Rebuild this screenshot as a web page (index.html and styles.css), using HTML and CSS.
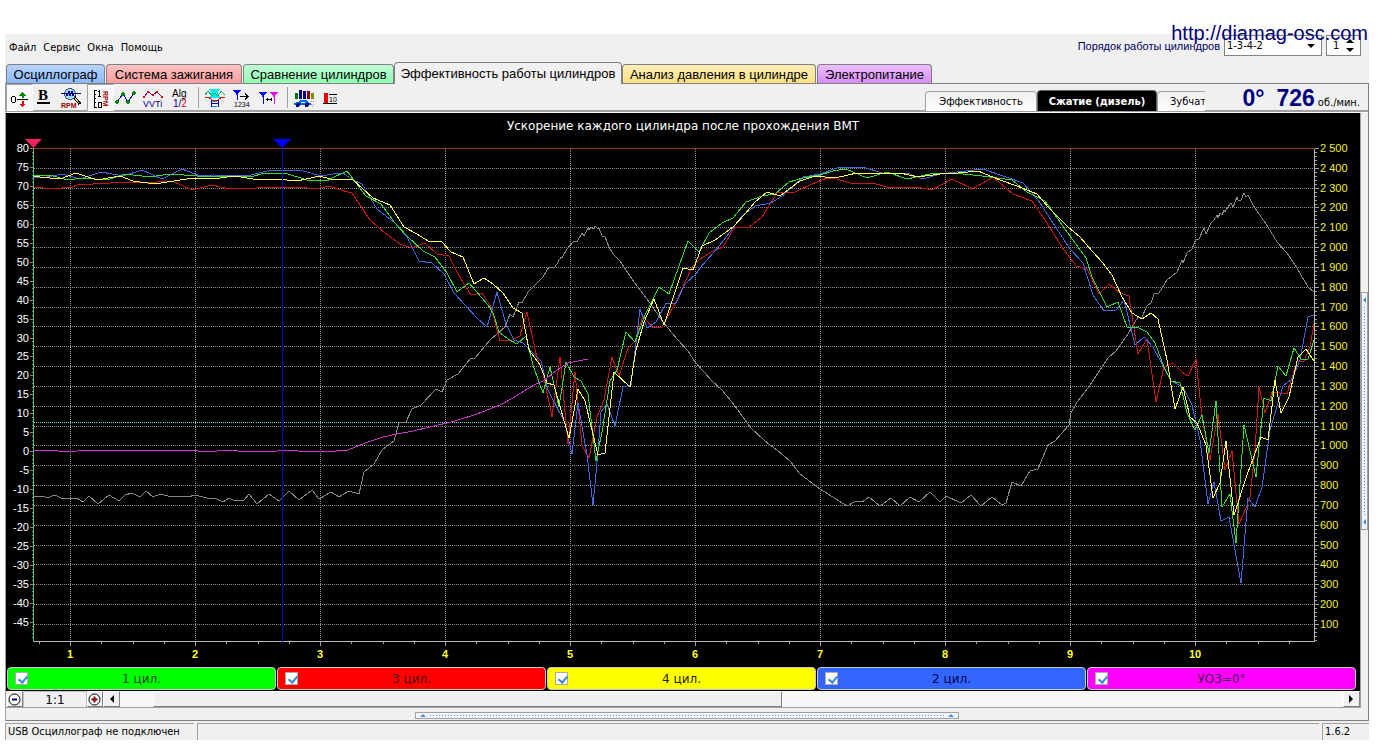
FILE: index.html
```
<!DOCTYPE html>
<html lang="ru">
<head>
    <meta charset="UTF-8">
    <meta name="viewport" content="width=device-width, initial-scale=1.0">
    <title>USB Осциллограф</title>
    <link rel="stylesheet" href="styles.css">
</head>
<body>
    <a class="site-link" href="#">http://diamag-osc.com</a>

    <div class="app">
        <header class="menu-bar">
            <nav class="menu">
                <a href="#">Файл</a>
                <a href="#">Сервис</a>
                <a href="#">Окна</a>
                <a href="#">Помощь</a>
            </nav>
            <div class="order">
                <label for="order">Порядок работы цилиндров</label>
                <div class="select-box">
                    <select id="order">
                        <option>1-3-4-2</option>
                        <option>1-2-4-3</option>
                    </select>
                </div>
                <div class="spin-box">
                    <input type="text" value="1" aria-label="Номер цилиндра">
                    <div class="spin-buttons">
                        <button class="spin-up" aria-label="Больше"></button>
                        <button class="spin-down" aria-label="Меньше"></button>
                    </div>
                </div>
            </div>
        </header>

        <nav class="tabs">
            <button class="tab tab-scope">Осциллограф</button>
            <button class="tab tab-ignition">Система зажигания</button>
            <button class="tab tab-compare">Сравнение цилиндров</button>
            <button class="tab tab-active">Эффективность работы цилиндров</button>
            <button class="tab tab-pressure">Анализ давления в цилиндре</button>
            <button class="tab tab-power">Электропитание</button>
        </nav>

        <main class="page">
            <div class="toolbar">
                <div class="tools">
                    <button class="tool pressed" aria-label="Ноль">
                        <svg viewBox="0 0 24 22">
                            <rect x="4.500" y="9.500" width="4" height="6" rx="2" fill="none" stroke="#000"/>
                            <path d="M10 12.500H21" stroke="#000"/>
                            <path d="M15.500 5L19 9H16.500V11H14.500V9H12Z" fill="#080"/>
                            <path d="M15.500 20L19 17H16.500V14H14.500V17H12Z" fill="#e00"/>
                        </svg>
                    </button>
                    <button class="tool" aria-label="Жирные линии">
                        <svg viewBox="0 0 24 22">
                            <text x="5" y="13" class="icon-bold">B</text>
                            <path d="M4 16H17" stroke="#000" stroke-width="2"/>
                        </svg>
                    </button>
                    <button class="tool" aria-label="Обороты">
                        <svg viewBox="0 0 24 22">
                            <path d="M14 10L20 17" stroke="#000" stroke-width="3"/>
                            <path d="M14 10L19 16" stroke="#e8c040" stroke-width="1"/>
                            <circle cx="10" cy="7" r="5.500" fill="#a8d8f8" stroke="#456"/>
                            <path d="M1 6.500H6L7 9L9 4L10 9L12 4L13 9L14 6.500H21" fill="none" stroke="#008"/>
                            <text x="1" y="21" class="icon-rpm">RPM</text>
                        </svg>
                    </button>
                    <button class="tool pressed" aria-label="Шкала оборотов">
                        <svg viewBox="0 0 24 22">
                            <path d="M9 3.500H6.500V20.500H9M6 7.500H8M6 11.500H8M6 15.500H8" fill="none" stroke="#000"/>
                            <path d="M10 5L11.500 4V9M10 9.500H13" fill="none" stroke="#000"/>
                            <rect x="10.500" y="15.500" width="3" height="5" rx="1" fill="none" stroke="#000"/>
                            <text class="icon-rpm" transform="translate(15 4) rotate(90)">RPM</text>
                        </svg>
                    </button>
                    <button class="tool" aria-label="Точки">
                        <svg viewBox="0 0 24 22">
                            <path d="M3 15L9 7L14 15L20 6" fill="none" stroke="#00a"/>
                            <path d="M2 13H4V14H5V16H4V17H2V16H1V14H2ZM8 5H10V6H11V8H10V9H8V8H7V6H8ZM13 13H15V14H16V16H15V17H13V16H12V14H13ZM19 4H21V5H22V7H21V8H19V7H18V5H19Z" fill="#080"/>
                        </svg>
                    </button>
                    <button class="tool" aria-label="VVTi">
                        <svg viewBox="0 0 24 22">
                            <path d="M3 10L7 5L12 8L16 5L21 10" fill="none" stroke="#808"/>
                            <path d="M2 9H4V11H2ZM6 4H8V6H6ZM11 7H13V9H11ZM15 4H17V6H15ZM20 9H22V11H20Z" fill="#e00"/>
                            <text x="2" y="20" class="icon-vvti">VVTi</text>
                        </svg>
                    </button>
                    <button class="tool" aria-label="Алгоритм">
                        <svg viewBox="0 0 24 22">
                            <text x="4" y="10" class="icon-text">Alg</text>
                            <text x="5" y="20" class="icon-text icon-blue">1/<tspan fill="#e00">2</tspan></text>
                        </svg>
                    </button>
                    <span class="separator"></span>
                    <button class="tool" aria-label="Форма сигнала">
                        <svg viewBox="0 0 24 22">
                            <path d="M6 2H17L15 5V8L18 11H6L8 8V5Z" fill="#0ee"/>
                            <path d="M2 8L5 4L9 9L12 6L15 9L18 4L22 8" fill="none" stroke="#0a6"/>
                            <path d="M2 10.500H6L9 13H15L18 10.500H22" fill="none" stroke="#e00"/>
                            <path d="M8 13V20M15 13V20M8 16.500H15" stroke="#00c"/>
                            <path d="M9 14.500H14M9 19.500H14" stroke="#0aa"/>
                        </svg>
                    </button>
                    <button class="tool" aria-label="Нумерация">
                        <svg viewBox="0 0 24 22">
                            <path d="M3 3H11L7.500 7.500H6.500Z" fill="#00f"/>
                            <path d="M7 6V13" stroke="#00f" stroke-width="1"/>
                            <path d="M10 9.500H18M15 6.500L18 9.500L15 12.500" fill="none" stroke="#000"/>
                            <text x="4" y="20" class="icon-digits">1234</text>
                        </svg>
                    </button>
                    <button class="tool" aria-label="Между маркерами">
                        <svg viewBox="0 0 24 22">
                            <path d="M2 5H10L6.500 9.500H5.500Z" fill="#00f"/>
                            <path d="M6 8V17" stroke="#00f"/>
                            <path d="M13 5H21L17.500 9.500H16.500Z" fill="#e0e"/>
                            <path d="M17 8V17" stroke="#e0e"/>
                            <path d="M9 12.500H15M10 11V14M14 11V14" fill="none" stroke="#000"/>
                        </svg>
                    </button>
                    <span class="separator"></span>
                    <button class="tool" aria-label="Эффективность">
                        <svg viewBox="0 0 24 22">
                            <path d="M3 6H6V12H3Z" fill="#070"/>
                            <path d="M7 3H10V12H7ZM11 4H14V12H11Z" fill="#008"/>
                            <path d="M15 4H18V12H15Z" fill="#800"/>
                            <path d="M19 6H22V12H19Z" fill="#880"/>
                            <path d="M2 18V16L6 15L8 13H14L17 16H19V18Z" fill="#06e"/>
                            <path d="M8.500 15.500H13" stroke="#cff"/>
                            <circle cx="6" cy="18" r="2" fill="#006"/>
                            <circle cx="15" cy="18" r="2" fill="#006"/>
                            <path d="M19 14.500H23M19 17.500H23M20 19.500H22" stroke="#999" stroke-dasharray="1 1"/>
                        </svg>
                    </button>
                    <button class="tool" aria-label="Десять циклов">
                        <svg viewBox="0 0 24 22">
                            <path d="M5 6H9V16H5Z" fill="#e00"/>
                            <path d="M10 7.500H18M4 16.500H18" stroke="#000"/>
                            <text x="10" y="15" class="icon-digits">10</text>
                        </svg>
                    </button>
                </div>

                <div class="sub-tabs">
                    <button class="sub-tab">Эффективность</button>
                    <button class="sub-tab sub-tab-active">Сжатие (дизель)</button>
                    <button class="sub-tab sub-tab-cut">Зубчат</button>
                </div>
                <div class="readout">
                    <span class="readout-angle">0°</span>
                    <span class="readout-rpm">726</span>
                    <span class="readout-unit">об./мин.</span>
                </div>
            </div>

            <div class="work">
                <div class="work-main">
                    <svg class="chart" id="chart" viewBox="6 113 1354 553">
                        <text class="chart-title" x="683" y="130">Ускорение каждого цилиндра после прохождения ВМТ</text>
                    </svg>

                    <div class="legend">
                        <label class="legend-item cyl-1"><input type="checkbox" checked><span>1 цил.</span></label>
                        <label class="legend-item cyl-3"><input type="checkbox" checked><span>3 цил.</span></label>
                        <label class="legend-item cyl-4"><input type="checkbox" checked><span>4 цил.</span></label>
                        <label class="legend-item cyl-2"><input type="checkbox" checked><span>2 цил.</span></label>
                        <label class="legend-item angle"><input type="checkbox" checked><span>УОЗ=0°</span></label>
                    </div>

                    <div class="scroll-row">
                        <button class="zoom-btn" aria-label="Уменьшить">
                            <svg viewBox="0 0 13 13">
                                <circle cx="6.500" cy="6.500" r="5.500" fill="#fff" stroke="#000"/>
                                <path d="M4 6.500H9" stroke="#008" stroke-width="2"/>
                            </svg>
                        </button>
                        <output class="zoom-value">1:1</output>
                        <button class="zoom-btn" aria-label="Увеличить">
                            <svg viewBox="0 0 13 13">
                                <circle cx="6.500" cy="6.500" r="5.500" fill="#fff" stroke="#000"/>
                                <path d="M3.500 6.500H9.500M6.500 3.500V9.500" stroke="#800" stroke-width="2"/>
                            </svg>
                        </button>
                        <button class="scroll-btn" aria-label="Влево">
                            <svg viewBox="0 0 5 8"><path d="M5 0V8L1 4Z"/></svg>
                        </button>
                        <div class="track"><div class="thumb"></div></div>
                        <button class="scroll-btn" aria-label="Вправо">
                            <svg viewBox="0 0 5 8"><path d="M0 0V8L4 4Z"/></svg>
                        </button>
                    </div>
                </div>
                <div class="side">
                    <div class="grip grip-side"><i></i><b></b><i></i></div>
                </div>
            </div>
            <div class="bottom">
                <div class="grip grip-bottom"><i></i><b></b><i></i></div>
            </div>
        </main>

        <footer class="status">
            <span class="status-device">USB Осциллограф не подключен</span>
            <span class="status-fill"></span>
            <span class="status-version">1.6.2</span>
        </footer>
    </div>

    <script>
        const chart = document.getElementById('chart');
        const left = 33, right = 1314, top0 = 148, bottom = 641;

        function add(tag, attrs, text) {
            const el = document.createElementNS('http://www.w3.org/2000/svg', tag);
            for (const key in attrs) el.setAttribute(key, attrs[key]);
            if (text !== undefined) el.textContent = text;
            chart.appendChild(el);
        }

        function line(cls, x1, y1, x2, y2) {
            add('line', { class: cls, x1: x1 + 0.5, y1: y1 + 0.5, x2: x2 + 0.5, y2: y2 + 0.5 });
        }

        const leftY = v => Math.round(top0 + (80 - v) * 3.79);
        const rightY = v => Math.round(top0 + (2500 - v) * 0.1983);
        const cylX = n => 70 + (n - 1) * 125;

        // grid
        for (let v = 100; v < 2500; v += 100) line('grid', left, rightY(v), right, rightY(v));
        for (let n = 1; n <= 10; n++) line('grid', cylX(n), top0, cylX(n), bottom);
        line('level', left, 422, right, 422);
        line('limit', left, top0, right, top0);

        const series = {
            rpm: '34,496 43,496 47,498 55,495 63,499 77,498 83,502 89,496 98,504 109,495 119,501 125,495 132,493 140,497 146,491 153,497 160,494 168,496 188,497 195,495 207,498 217,499 223,502 229,498 235,501 244,500 249,494 257,504 269,494 279,501 289,491 299,500 312,490 319,499 331,492 339,497 349,491 359,494 364,472 374,464 382,450 394,441 399,423 406,422 412,409 421,405 436,389 442,392 447,380 458,374 471,358 475,358 490,340 505,327 510,314 513,317 519,302 522,303 528,292 543,277 549,267 555,267 561,257 562,258 567,249 574,241 577,242 582,233 584,236 588,228 589,230 591,227 594,229 595,226 597,228 599,228 602,236 605,237 609,247 613,254 620,261 632,279 652,306 663,322 677,339 688,351 695,362 712,381 722,390 735,406 750,427 765,441 777,450 790,461 800,474 820,489 847,506 856,501 862,502 869,497 880,506 891,498 900,506 910,497 919,502 930,492 940,502 946,496 961,503 971,495 981,506 992,497 1002,505 1006,503 1012,482 1021,486 1030,471 1038,469 1048,445 1055,441 1069,425 1071,413 1077,402 1088,388 1102,367 1108,358 1116,351 1128,334 1138,317 1142,317 1147,306 1151,303 1154,294 1159,293 1167,280 1177,272 1182,260 1183,263 1187,253 1192,249 1196,239 1199,239 1204,228 1206,234 1211,223 1214,220 1217,215 1218,218 1220,213 1222,215 1224,210 1225,212 1228,207 1231,203 1233,207 1237,197 1238,200 1241,200 1244,193 1246,197 1248,195 1253,205 1268,227 1277,242 1287,253 1297,268 1308,287 1314,292',
            cyl3: '34,187 53,189 72,187 77,185 110,183 127,182 157,182 172,181 192,190 212,185 230,189 257,188 267,187 300,187 315,189 330,186 337,189 352,193 370,220 385,233 400,244 412,248 425,243 437,254 449,256 458,274 471,295 482,293 491,307 500,341 512,340 520,336 527,312 537,358 543,373 552,417 560,357 568,444 575,372 582,445 589,458 597,417 604,400 612,357 619,376 628,348 635,341 643,316 652,327 662,327 677,300 692,267 700,259 713,251 723,247 735,227 748,228 762,217 777,193 795,192 812,184 827,178 837,179 850,183 873,183 890,188 917,187 932,190 952,179 973,189 993,177 1013,194 1032,201 1045,220 1062,247 1076,266 1087,269 1089,273 1099,294 1109,284 1120,293 1129,296 1138,354 1147,339 1156,402 1164,367 1173,363 1182,372 1188,376 1196,359 1202,417 1210,460 1218,414 1225,470 1232,451 1239,524 1244,513 1250,497 1255,450 1259,387 1265,413 1272,392 1287,394 1297,362 1304,361 1310,347 1314,324',
            cyl2: '34,177 47,177 62,174 80,179 101,172 123,176 142,170 162,179 182,169 200,176 213,175 247,176 267,171 290,170 303,171 322,176 338,173 343,173 353,180 362,184 377,209 395,223 407,237 419,261 432,263 444,274 454,293 477,318 487,327 497,292 506,324 514,340 523,343 532,352 541,361 548,390 565,423 572,454 578,403 587,455 593,505 598,452 601,412 607,404 615,426 623,387 631,385 640,309 647,328 656,322 666,303 676,303 685,284 696,274 700,268 720,245 742,216 755,206 771,203 785,194 803,177 820,174 840,167 863,167 882,173 907,173 923,179 940,174 983,169 1023,183 1038,200 1053,223 1070,249 1083,263 1093,295 1104,311 1116,310 1124,300 1135,345 1144,337 1153,347 1171,381 1183,387 1192,405 1200,440 1208,504 1214,482 1221,521 1229,517 1241,583 1248,498 1255,507 1262,487 1270,430 1283,386 1292,379 1300,360 1308,317 1314,315',
            cyl1: '34,175 50,175 67,180 83,178 107,180 125,174 133,175 150,177 163,175 170,174 197,176 217,176 233,176 250,177 265,173 285,173 307,180 327,181 330,179 347,171 366,196 381,204 395,223 407,236 423,251 435,257 447,273 457,292 469,283 488,305 493,313 499,332 508,339 517,344 526,336 533,365 543,393 550,367 559,407 566,362 574,377 581,381 588,394 596,461 602,432 610,381 617,370 626,332 635,342 645,315 659,287 669,294 688,241 699,252 709,233 722,223 733,218 746,202 762,196 775,194 789,182 803,178 820,175 833,171 846,169 867,178 887,172 907,179 930,174 953,173 973,175 990,177 1012,180 1027,192 1045,201 1070,236 1086,258 1092,277 1107,307 1118,302 1127,327 1137,327 1147,332 1155,343 1164,367 1171,381 1180,383 1187,413 1195,430 1202,415 1209,453 1216,401 1222,507 1230,494 1236,543 1244,425 1256,477 1264,398 1271,401 1278,366 1286,376 1294,348 1301,359 1308,359 1314,340',
            cyl4: '34,176 40,177 60,179 76,173 97,180 120,176 133,181 155,184 180,180 195,178 220,178 235,176 253,179 277,179 297,181 320,176 330,179 353,180 373,198 390,205 404,227 417,234 428,241 441,241 451,252 463,257 474,284 484,278 493,284 503,293 513,308 522,313 529,350 540,365 547,383 554,385 563,417 569,438 578,389 585,401 598,455 605,453 614,372 630,387 636,350 644,322 654,299 664,325 683,268 693,270 702,246 715,240 733,227 745,214 755,202 767,192 780,196 800,181 815,176 835,178 857,173 877,174 900,173 918,177 940,174 958,173 978,171 1000,180 1017,186 1037,194 1048,207 1068,227 1080,237 1092,251 1103,263 1112,275 1122,297 1132,313 1142,319 1151,313 1158,319 1167,360 1175,409 1183,387 1190,417 1197,423 1206,445 1213,498 1220,483 1226,441 1234,515 1247,475 1261,437 1268,440 1275,380 1281,413 1289,397 1298,357 1306,349 1314,361',
            uoz: '34,450 57,450 58,451 77,451 78,450 197,450 198,451 217,451 218,450 237,450 238,451 277,451 278,450 297,450 298,451 336,451 348,450 355,447 368,442 383,437 397,434 413,431 430,427 455,421 477,414 500,405 513,398 532,386 543,381 557,370 568,363 578,361 588,359'
        };
        for (const name in series) add('polyline', { class: 'curve ' + name, points: series[name] });

        // left scale
        for (let v = 80; v >= -49; v--) {
            const y = leftY(v);
            if (v % 5 === 0) {
                line('tick-left', left - 4, y, left, y);
                add('text', { class: 'label-left', x: 29, y: y + 4 }, v);
            } else {
                line('tick-minor', left - 2, y, left, y);
            }
        }
        line('axis-left', left, top0, left, bottom);

        // right scale
        for (let v = 2500; v >= 20; v -= 20) {
            const y = rightY(v);
            line('tick', right, y, right + (v % 100 ? 2 : 4), y);
            if (v % 100 === 0) {
                const text = v >= 1000 ? Math.floor(v / 1000) + ' ' + String(v % 1000).padStart(3, '0') : v;
                add('text', { class: 'label-right', x: 1320, y: y + 4 }, text);
            }
        }
        line('axis', right, top0, right, bottom);

        for (let n = 0.75; n < 11; n += 0.25) {
            const x = Math.round(cylX(n));
            line('tick', x, bottom, x, bottom + (n % 1 ? 2 : 4));
            if (n % 1 === 0) add('text', { class: 'label-bottom', x: x, y: 658 }, n);
        }
        line('axis', left, bottom, right, bottom);

        // markers
        line('cursor', 282, 146, 282, bottom);
        add('path', { d: 'M25 139H42L33.5 148Z', fill: '#f8205c' });
        add('path', { d: 'M273 139H291L282 148Z', fill: '#00f' });
    </script>
</body>
</html>
```
FILE: styles.css
```
* {
    box-sizing: border-box;
}
body {
    margin: 0;
    padding: 34px 13px 4px 5px;
    background: #fff;
    color: #000;
    font-family: "DejaVu Sans Condensed", "DejaVu Sans", sans-serif;
    font-size: 11px;
}
button,
input,
select {
    font: inherit;
    color: inherit;
    margin: 0;
    padding: 0;
    border: 0;
    border-radius: 0;
    background: none;
    appearance: none;
}
.site-link {
    position: absolute;
    z-index: 2;
    top: 21px;
    right: 14px;
    color: #000078;
    font-family: "Liberation Sans", Arial, sans-serif;
    font-size: 20px;
    line-height: 24px;
    text-decoration: none;
}
.app {
    background: #f0f0f0;
}

/* menu */
.menu-bar {
    display: flex;
    justify-content: space-between;
    height: 28px;
}
.menu {
    display: flex;
    gap: 7px;
    padding: 7px 4px;
    line-height: 14px;
}
.menu a {
    color: #000;
    text-decoration: none;
}
.order {
    display: flex;
    align-items: flex-start;
    gap: 4px;
    padding: 1px 8px 0 0;
}
.order label {
    color: #000060;
    font-family: "Liberation Sans", Arial, sans-serif;
    line-height: 22px;
}
.select-box,
.spin-box {
    display: flex;
    position: relative;
    height: 21px;
    border: 1px solid #848484;
    background: #fff;
}
.select-box {
    width: 98px;
}
.select-box select {
    width: 100%;
    padding-left: 2px;
}
.select-box::after {
    content: "";
    position: absolute;
    top: 8px;
    right: 6px;
    border: 4px solid transparent;
    border-top-color: #000;
    border-bottom: 0;
    pointer-events: none;
}
.spin-box {
    width: 35px;
}
.spin-box input {
    width: 19px;
    padding-left: 6px;
}
.spin-buttons {
    display: flex;
    flex-direction: column;
    justify-content: center;
    gap: 5px;
}
.spin-up,
.spin-down {
    border: 4px solid transparent;
}
.spin-up {
    border-top: 0;
    border-bottom-color: #000;
}
.spin-down {
    border-bottom: 0;
    border-top-color: #000;
}

/* main tabs */
.tabs {
    display: flex;
    align-items: flex-end;
    height: 21px;
    padding-left: 1px;
    font-family: "Liberation Sans", Arial, sans-serif;
    font-size: 13px;
}
.tab {
    height: 19px;
    margin-right: 1px;
    border: 1px solid #808080;
    border-bottom: 0;
    border-radius: 4px 4px 0 0;
    white-space: nowrap;
}
.tab-scope {
    width: 99px;
    background: linear-gradient(#b8d4ff, #8ab8fc);
}
.tab-ignition {
    width: 136px;
    background: linear-gradient(#ffc4c4, #f89c9c);
}
.tab-compare {
    width: 151px;
    margin-right: 0;
    background: linear-gradient(#c0ffd4, #90ffb4);
}
.tab-active {
    z-index: 1;
    width: 228px;
    height: 22px;
    margin: 0 0 -1px;
    background: #f0f0f0;
}
.tab-pressure {
    width: 194px;
    background: linear-gradient(#fff0b8, #fce080);
}
.tab-power {
    width: 115px;
    background: linear-gradient(#ecc0ff, #d88cf8);
}

/* page */
.page {
    border: 1px solid #808080;
    border-left-color: #a0a0a0;
}
.toolbar {
    display: flex;
    height: 29px;
    border-bottom: 1px solid #fff;
    box-shadow: inset 0 -2px #a0a0a0;
}
.tools {
    display: flex;
    flex: 1;
    height: 27px;
}
.tool {
    width: 27px;
    height: 27px;
    padding: 1px 2px 0 0;
}
.tool.pressed {
    border: 1px solid;
    border-color: #a0a0a0 #fff #fff #a0a0a0;
    background: #f8f8f8;
    padding: 0 1px 0 0;
}
.tool svg {
    display: block;
    width: 24px;
    height: 22px;
    shape-rendering: crispEdges;
}
.separator {
    width: 8px;
    margin: 3px 0;
    background: linear-gradient(#a0a0a0, #a0a0a0) 3px 0 / 1px 100% no-repeat;
}
.icon-bold {
    font: bold 15px "Liberation Serif", serif;
}
.icon-rpm {
    font: bold 7px "Liberation Sans", sans-serif;
    fill: #a00000;
}
.icon-text {
    font: 10px "Liberation Sans", sans-serif;
}
.icon-vvti {
    font: 9px "Liberation Sans", sans-serif;
    fill: #000090;
}
.icon-blue {
    fill: #000090;
}
.icon-digits {
    font: 7px "Liberation Sans", sans-serif;
}
.sub-tabs {
    display: flex;
    align-items: flex-end;
    width: 280px;
    height: 27px;
    overflow: hidden;
}
.sub-tab {
    flex: none;
    width: 112px;
    height: 20px;
    border: 1px solid #a0a0a0;
    border-bottom: 0;
    border-radius: 4px 4px 0 0;
    background: linear-gradient(#f0f0f0, #fff);
}
.sub-tab-active {
    width: 120px;
    height: 21px;
    border-color: #606060;
    background: #000;
    color: #fff;
    font-weight: bold;
}
.sub-tab-cut {
    width: 80px;
    padding-left: 12px;
    text-align: left;
}
.readout {
    display: flex;
    align-items: baseline;
    justify-content: flex-end;
    width: 163px;
    padding-right: 8px;
    color: #000080;
    font-family: "Liberation Sans", Arial, sans-serif;
    font-size: 23px;
    font-weight: bold;
    line-height: 28px;
}
.readout-angle {
    margin-right: 12px;
}
.readout-rpm {
    margin-right: 3px;
}
.readout-unit {
    color: #000;
    font-family: "DejaVu Sans Condensed", "DejaVu Sans", sans-serif;
    font-size: 11px;
    font-weight: normal;
}
.work {
    display: flex;
}
.work-main {
    flex: 1;
    min-width: 0;
    background: #000;
    border-bottom: 1px solid #a0a0a0;
}
.side {
    display: flex;
    align-items: center;
    width: 8px;
    border-left: 1px solid #a0a0a0;
}

/* chart */
.chart {
    display: block;
    width: 100%;
    height: auto;
    background: #000;
    font-family: "Liberation Sans", Arial, sans-serif;
    font-size: 11px;
}
.chart line,
.chart polyline {
    fill: none;
    stroke-width: 1;
    shape-rendering: crispEdges;
}
.chart-title {
    fill: #fff;
    font-family: "DejaVu Sans", sans-serif;
    font-size: 12px;
    text-anchor: middle;
}
.grid {
    stroke: #909090;
    stroke-dasharray: 1 1;
}
.level {
    stroke: #60e0d8;
    stroke-dasharray: 1 1;
}
.limit { stroke: #904018; }
.axis { stroke: #b8b8b8; }
.axis-left { stroke: #50c088; }
.tick { stroke: #a0a0a0; }
.tick-left { stroke: #a08060; }
.tick-minor { stroke: #40a070; }
.cursor { stroke: #0000d0; }
.label-left {
    fill: #fff;
    text-anchor: end;
}
.label-right { fill: #f0f030; }
.label-bottom {
    fill: #ffff20;
    font-weight: bold;
    text-anchor: middle;
}
.rpm { stroke: #888; }
.cyl1 { stroke: #38d838; }
.cyl2 { stroke: #4468e0; }
.cyl3 { stroke: #c81818; }
.cyl4 { stroke: #ffff50; }
.uoz { stroke: #c838c8; }

/* legend */
.legend {
    display: flex;
    gap: 1px;
    padding: 1px 4px 1px 1px;
}
.legend-item {
    display: flex;
    flex: 1;
    position: relative;
    align-items: center;
    justify-content: center;
    height: 23px;
    border: 1px solid #c8c8c8;
    border-radius: 4px;
    font-family: "DejaVu Sans", sans-serif;
    font-size: 12px;
}
.legend-item input {
    position: absolute;
    left: 7px;
    width: 13px;
    height: 13px;
    border: 1px solid #b0a8a8;
    background: #fff;
}
.legend-item input:checked::after {
    content: "";
    position: absolute;
    left: 4px;
    top: 1px;
    width: 4px;
    height: 7px;
    border: solid #3c88d8;
    border-width: 0 2px 2px 0;
    transform: rotate(40deg);
}
.cyl-1 { background: #00ff00; color: #004000; }
.cyl-3 { background: #ff0000; color: #500000; }
.cyl-4 { background: #ffff00; color: #202000; }
.cyl-2 { background: #3366ff; color: #000050; }
.angle { background: #ff00ff; color: #500050; }

/* zoom and scroll */
.scroll-row {
    display: flex;
    height: 16px;
    padding-left: 1px;
    background: #f0f0f0;
}
.zoom-btn,
.scroll-btn,
.thumb {
    border: 1px solid;
    border-color: #fff #808080 #808080 #fff;
    background: #f0f0f0;
}
.zoom-btn {
    width: 16px;
}
.zoom-btn svg {
    display: block;
    width: 13px;
    height: 13px;
}
.zoom-value {
    width: 64px;
    border: 1px solid #c0c0c0;
    border-width: 1px 1px 0;
    font-family: "DejaVu Sans", sans-serif;
    font-size: 12px;
    line-height: 17px;
    text-align: center;
}
.scroll-btn {
    display: flex;
    align-items: center;
    justify-content: center;
    width: 17px;
}
.scroll-btn svg {
    width: 5px;
    height: 8px;
}
.track {
    flex: 1;
    background: repeating-conic-gradient(#fff 0 25%, #f0f0f0 0 50%) 0 0 / 2px 2px;
}
.thumb {
    width: 51.4%;
    height: 100%;
    margin-left: 2.7%;
}

/* splitters */
.bottom {
    display: flex;
    justify-content: center;
    height: 12px;
    padding-top: 4px;
}
.grip {
    display: flex;
    align-items: center;
    justify-content: space-between;
    border: 1px solid #a0a0a0;
    background: #f0f4fc;
}
.grip i {
    border: 3px solid transparent;
}
.grip b {
    flex: 1;
}
.grip-bottom {
    width: 40%;
    height: 7px;
    padding: 0 4px;
}
.grip-bottom i {
    border-top: 0;
    border-bottom-color: #4890d8;
}
.grip-bottom b {
    height: 1px;
    margin: 0 4px;
    background: repeating-linear-gradient(90deg, #4890d8 0 1px, transparent 1px 3px);
}
.grip-side {
    flex-direction: column;
    width: 7px;
    height: 40%;
    padding: 4px 0;
}
.grip-side i {
    border-left: 0;
    border-right-color: #4890d8;
}
.grip-side b {
    width: 1px;
    margin: 4px 0;
    background: repeating-linear-gradient(#4890d8 0 1px, transparent 1px 3px);
}

/* status bar */
.status {
    display: flex;
    gap: 3px;
    padding-top: 2px;
    line-height: 16px;
}
.status span {
    height: 17px;
    border: solid #a0a0a0;
    border-width: 1px 0 0 1px;
    padding-left: 2px;
}
.status-device {
    width: 189px;
    white-space: nowrap;
}
.status-fill {
    flex: 1;
}
.status-version {
    width: 47px;
}
```
